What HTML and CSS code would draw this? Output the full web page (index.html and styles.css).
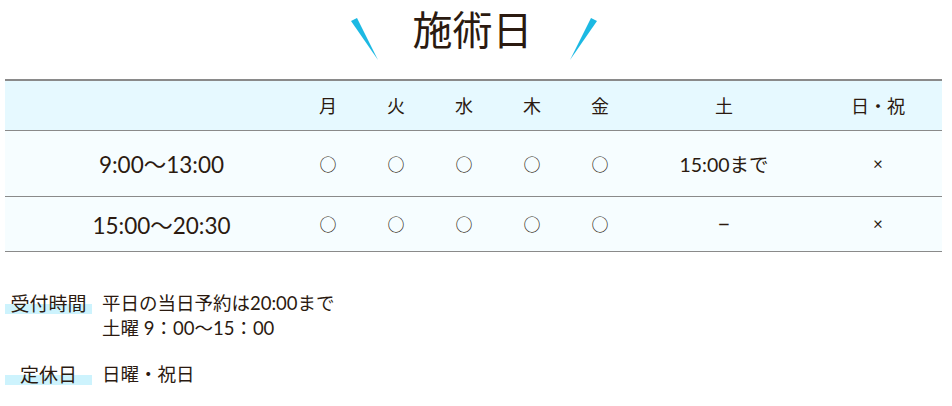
FILE: index.html
```html
<!DOCTYPE html>
<html lang="ja">
<head>
<meta charset="utf-8">
<title>施術日</title>
<link rel="stylesheet" href="styles.css">
</head>
<body>
<div class="page">
  <h2 class="title">
    <svg class="slash slash-l" width="29" height="44" viewBox="0 0 29 44"><polygon points="1,4 7,1 28,43" fill="#1cb9e3"/></svg>
    <span class="title-text">施術日</span>
    <svg class="slash slash-r" width="29" height="44" viewBox="0 0 29 44"><polygon points="22,1 28,4 1,43" fill="#1cb9e3"/></svg>
  </h2>
  <table class="schedule">
    <colgroup>
      <col class="c-time"><col class="c-day"><col class="c-day"><col class="c-day"><col class="c-day"><col class="c-day"><col class="c-sat"><col class="c-sun">
    </colgroup>
    <thead>
      <tr>
        <th></th><th>月</th><th>火</th><th>水</th><th>木</th><th>金</th><th>土</th><th>日・祝</th>
      </tr>
    </thead>
    <tbody>
      <tr class="r1">
        <td class="time">9:00～13:00</td><td class="o">○</td><td class="o">○</td><td class="o">○</td><td class="o">○</td><td class="o">○</td><td class="sat">15:00まで</td><td class="x">×</td>
      </tr>
      <tr class="r2">
        <td class="time">15:00～20:30</td><td class="o">○</td><td class="o">○</td><td class="o">○</td><td class="o">○</td><td class="o">○</td><td class="dash">−</td><td class="x">×</td>
      </tr>
    </tbody>
  </table>
  <dl class="info">
    <dt><span class="mark">受付時間</span></dt>
    <dd>平日の当日予約は20:00まで<br>土曜 9：00～15：00</dd>
    <dt><span class="mark">定休日</span></dt>
    <dd>日曜・祝日</dd>
  </dl>
</div>
</body>
</html>
```

FILE: styles.css
```css
html, body {
  margin: 0;
  padding: 0;
  background: #fff;
}
body {
  font-family: Lato, "Noto Sans CJK JP", sans-serif;
  color: #2b1a10;
}
.page {
  padding: 0 10px 0 5px;
}
.title {
  margin: 0;
  height: 79px;
  display: flex;
  align-items: flex-start;
  justify-content: center;
  font-weight: 400;
}
.title .slash {
  display: block;
  margin-top: 17px;
}
.title .slash-r {
  margin-left: -2px;
}
.title-text {
  font-size: 40px;
  line-height: 1;
  margin: 10px 38px 0 34px;
}
.schedule {
  width: 937px;
  border-collapse: collapse;
  table-layout: fixed;
  border-top: 2px solid #8a8a8a;
}
.c-time { width: 289px; }
.c-day { width: 68px; }
.c-sat { width: 180px; }
.c-sun { width: 128px; }
.schedule th,
.schedule td {
  text-align: center;
  font-weight: 400;
  font-size: 18px;
  padding: 0;
  border-bottom: 1px solid #8a8a8a;
}
.schedule thead tr {
  background: #e6f9ff;
  height: 50px;
}
.schedule tbody tr {
  background: #f6fdff;
}
.schedule .r1 { height: 66px; }
.schedule .r2 { height: 55px; }
.schedule td.time {
  font-size: 22.5px;
  padding-left: 24px;
}
.schedule td.o {
  font-family: "Noto Sans CJK JP", sans-serif;
  font-size: 17px;
}
.schedule td.sat {
  font-size: 19.5px;
}
.schedule td.x {
  font-size: 17px;
}
.schedule td.dash {
  font-size: 22px;
}
.info {
  margin: 39px 0 0 0;
  display: grid;
  grid-template-columns: 87px 1fr;
  column-gap: 10px;
  row-gap: 21px;
  font-size: 18.5px;
  line-height: 25px;
}
.info dt {
  margin: 0;
  text-align: center;
  font-size: 19px;
}
.info .mark {
  display: block;
  background: linear-gradient(transparent 52%, #cdf3fd 52%, #cdf3fd 92%, transparent 92%);
}
.info dd {
  margin: 0;
}
```
